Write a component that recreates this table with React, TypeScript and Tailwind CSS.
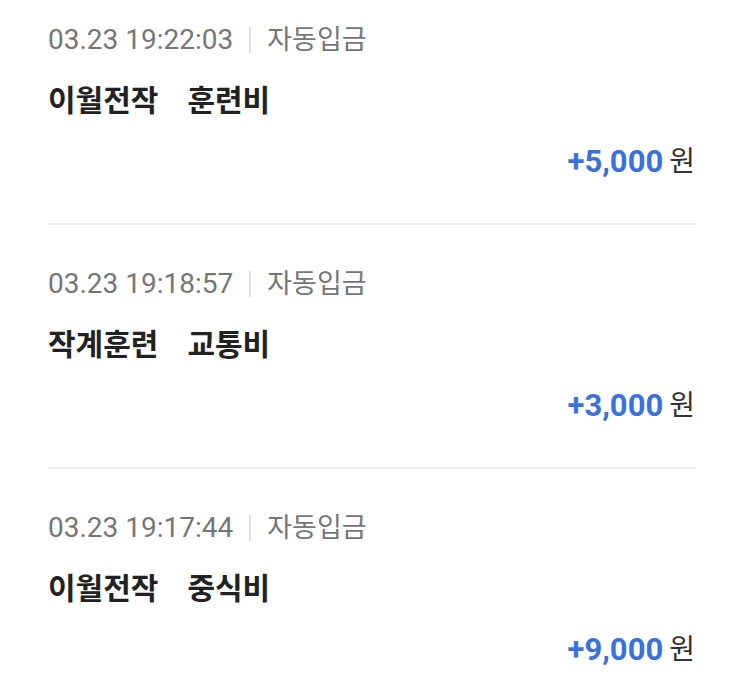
const items = [
  { time: "03.23 19:22:03", title: "이월전작", sub: "훈련비", amount: "+5,000" },
  { time: "03.23 19:18:57", title: "작계훈련", sub: "교통비", amount: "+3,000" },
  { time: "03.23 19:17:44", title: "이월전작", sub: "중식비", amount: "+9,000" },
];

export default function App() {
  return (
    <div
      className="min-h-[691px] w-[743px] bg-white px-12"
      style={{ fontFamily: 'Roboto, "Noto Sans CJK KR", sans-serif' }}
    >
      {items.map((it, i) => (
        <div
          key={i}
          className={`flex flex-col pb-[41px] ${i === 0 ? "pt-[20px]" : "pt-[39px]"} ${i < items.length - 1 ? "border-b-2 border-[#ececec]" : ""}`}
        >
          {/* time + type */}
          <div className="flex h-[40px] items-center text-[28px] text-[#767676]">
            <span>{it.time}</span>
            <span className="mx-[16px] h-[26px] w-[2px] bg-[#e0e0e0]" />
            <span className="text-[27px]">자동입금</span>
          </div>
          {/* title */}
          <div className="mt-[20px] flex h-[40px] items-center text-[30px] font-bold text-[#222]">
            <span>{it.title}</span>
            <span className="ml-[29px]">{it.sub}</span>
          </div>
          {/* amount */}
          <div className="mt-[22px] flex h-[40px] items-center justify-end">
            <span className="text-[31px] font-bold text-[#3b72d9]">{it.amount}</span>
            <span className="ml-[6px] text-[28px] text-[#333]">원</span>
          </div>
        </div>
      ))}
    </div>
  );
}
